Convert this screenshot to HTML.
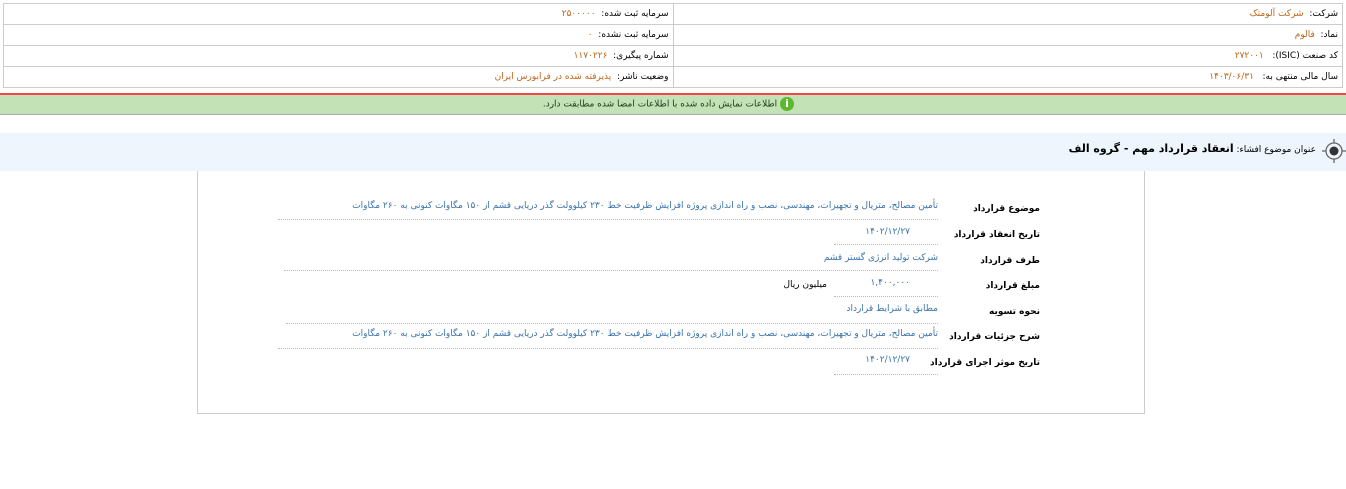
<!DOCTYPE html>
<html><head><meta charset="utf-8"><style>
body{margin:0;width:1346px;height:489px;background:#fff;font-family:"DejaVu Sans","Liberation Sans",sans-serif;font-size:9px;color:#000;position:relative;overflow:hidden}
.a{position:absolute;white-space:nowrap;direction:rtl}
table.t{position:absolute;left:3px;top:3px;width:1340px;border-collapse:collapse;direction:rtl}
table.t td{border:1px solid #ccc;height:20px;padding:0 4px;font-size:9px;width:50%}
.o{color:#c0651a}
.v{color:#3b72ab}
.dl{position:absolute;border-top:1px dotted #bbb;height:0}
b{font-weight:bold}
</style></head><body>
<table class="t">
<tr><td>شرکت:&nbsp; <span class="o">شرکت آلومتک</span></td><td>سرمایه ثبت شده:&nbsp; <span class="o">۲۵۰۰۰۰۰</span></td></tr>
<tr><td>نماد:&nbsp; <span class="o">فالوم</span></td><td>سرمایه ثبت نشده:&nbsp; <span class="o">۰</span></td></tr>
<tr><td>کد صنعت (ISIC):&nbsp;&nbsp; <span class="o">۲۷۲۰۰۱</span></td><td>شماره پیگیری:&nbsp; <span class="o">۱۱۷۰۲۲۶</span></td></tr>
<tr><td>سال مالی منتهی به:&nbsp;&nbsp; <span class="o">۱۴۰۳/۰۶/۳۱</span></td><td>وضعیت ناشر:&nbsp; <span class="o">پذیرفته شده در فرابورس ایران</span></td></tr>
</table>
<div style="position:absolute;left:0;top:93px;width:1346px;height:2px;background:#f04848"></div>
<div style="position:absolute;left:0;top:95px;width:1346px;height:19px;background:#c3e2b5;border-bottom:1px solid #aaa"></div>
<div class="a" style="right:552px;top:97px;line-height:15px;color:#1a3a1a">
<span style="display:inline-block;width:14px;height:14px;border-radius:50%;background:#5cb82e;color:#fff;text-align:center;font-weight:bold;font-size:11px;line-height:14px;vertical-align:middle">i</span> اطلاعات نمایش داده شده با اطلاعات امضا شده مطابقت دارد.</div>
<div style="position:absolute;left:0;top:133px;width:1346px;height:38px;background:#eef5fc"></div>
<svg style="position:absolute;left:1320px;top:136px" width="26" height="30" viewBox="0 0 26 30"><circle cx="14" cy="15" r="8" fill="none" stroke="#666" stroke-width="1.3"/><circle cx="14" cy="15" r="4.5" fill="#333"/><path d="M14 3v4M14 23v4M2 15h4M22 15h4" stroke="#666" stroke-width="1.3"/></svg>
<div class="a" style="right:30px;top:142px;font-size:9px">عنوان موضوع افشاء: <b style="font-size:11px">انعقاد قرارداد مهم - گروه الف</b></div>
<div style="position:absolute;left:197px;top:171px;width:946px;height:242px;border:1px solid #ccc;border-top:none"></div>

<div class="a" style="right:306px;top:204px;font-weight:bold">موضوع قرارداد</div>
<div class="a v" style="right:408px;top:201px">تأمین مصالح، متریال و تجهیزات، مهندسی، نصب و راه اندازی پروژه افزایش ظرفیت خط ۲۳۰ کیلوولت گذر دریایی قشم از ۱۵۰ مگاوات کنونی به ۲۶۰ مگاوات</div>
<div class="dl" style="left:278px;width:660px;top:219px"></div>

<div class="a" style="right:306px;top:230px;font-weight:bold">تاریخ انعقاد قرارداد</div>
<div class="a v" style="right:436px;top:227px">۱۴۰۲/۱۲/۲۷</div>
<div class="dl" style="left:834px;width:104px;top:244px"></div>

<div class="a" style="right:306px;top:256px;font-weight:bold">طرف قرارداد</div>
<div class="a v" style="right:408px;top:253px">شرکت تولید انرژی گستر قشم</div>
<div class="dl" style="left:284px;width:654px;top:270px"></div>

<div class="a" style="right:306px;top:281px;font-weight:bold">مبلغ قرارداد</div>
<div class="a v" style="right:436px;top:278px">۱,۴۰۰,۰۰۰</div>
<div class="a" style="right:519px;top:280px">میلیون ریال</div>
<div class="dl" style="left:834px;width:104px;top:296px"></div>

<div class="a" style="right:306px;top:307px;font-weight:bold">نحوه تسویه</div>
<div class="a v" style="right:408px;top:304px">مطابق با شرایط قرارداد</div>
<div class="dl" style="left:286px;width:652px;top:323px"></div>

<div class="a" style="right:306px;top:332px;font-weight:bold">شرح جزئیات قرارداد</div>
<div class="a v" style="right:408px;top:329px">تأمین مصالح، متریال و تجهیزات، مهندسی، نصب و راه اندازی پروژه افزایش ظرفیت خط ۲۳۰ کیلوولت گذر دریایی قشم از ۱۵۰ مگاوات کنونی به ۲۶۰ مگاوات</div>
<div class="dl" style="left:278px;width:660px;top:348px"></div>

<div class="a" style="right:306px;top:358px;font-weight:bold">تاریخ موثر اجرای قرارداد</div>
<div class="a v" style="right:436px;top:355px">۱۴۰۲/۱۲/۲۷</div>
<div class="dl" style="left:834px;width:104px;top:374px"></div>
</body></html>
